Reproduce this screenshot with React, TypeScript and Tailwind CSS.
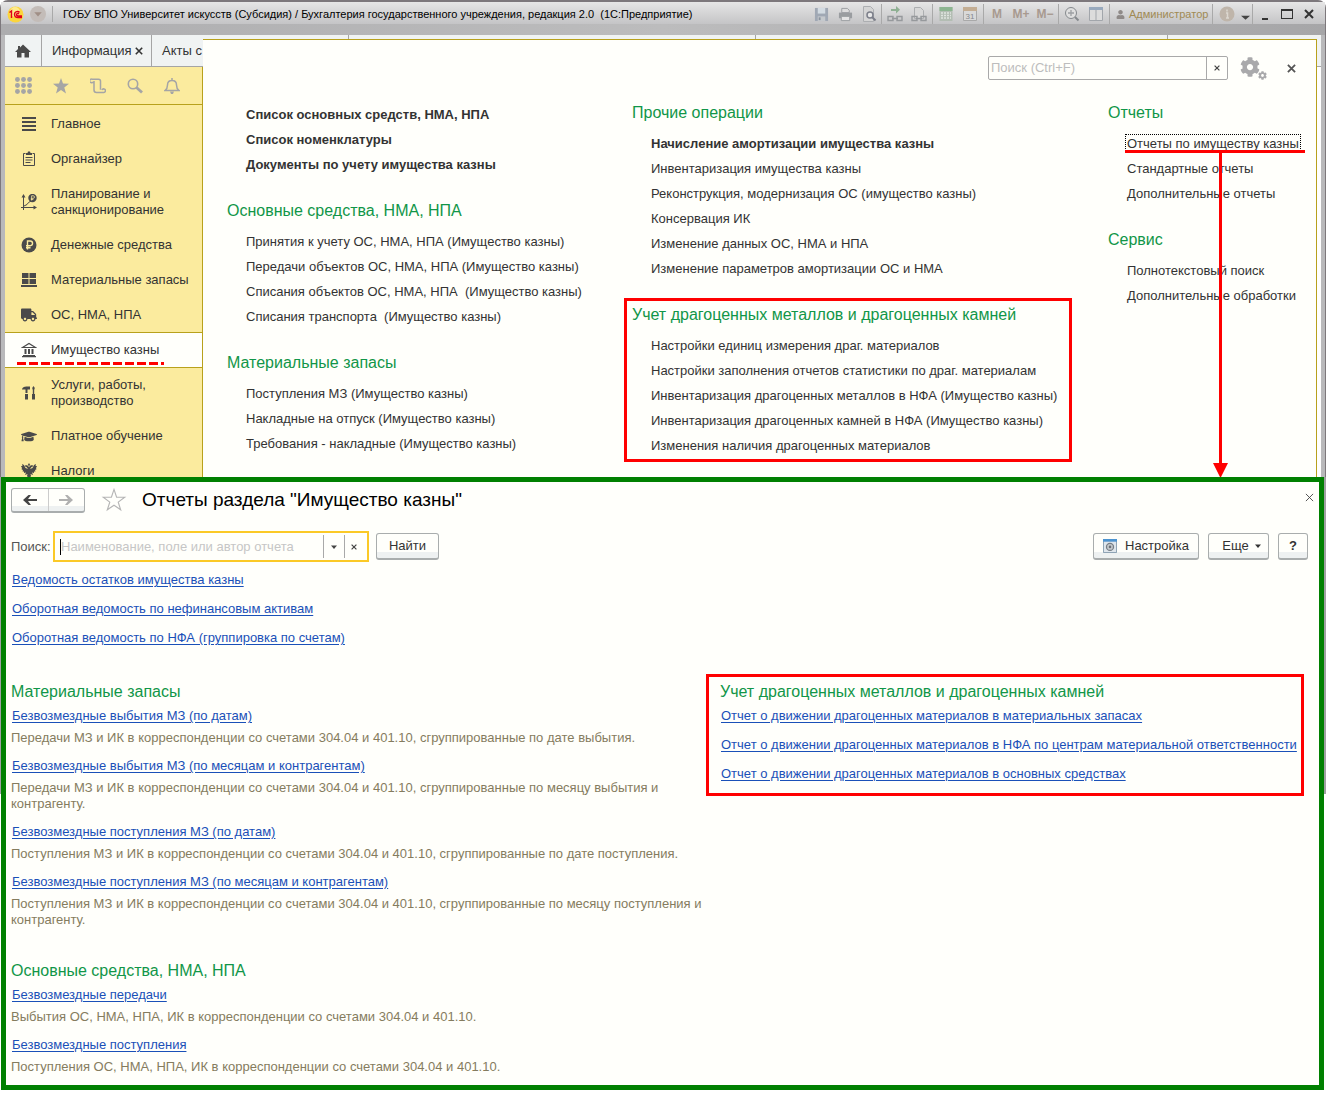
import React from 'react';
import { FaCog, FaGraduationCap, FaTruck, FaUser } from 'react-icons/fa';

interface MenuItem {
  label: string;
  icon: React.ReactNode;
  active?: boolean;
}

interface MenuGroup {
  title?: string;
  items: string[];
  bold?: number[];
  marked?: boolean;
}

interface Report {
  name: string;
  description: string;
}

const Svg: React.FC<{ size?: number; className?: string; children: React.ReactNode }> = ({ size = 16, className, children }) => (
  <svg width={size} height={size} viewBox="0 0 16 16" className={className} fill="currentColor" aria-hidden="true">
    {children}
  </svg>
);

const stroke = { fill: 'none', stroke: 'currentColor' };

const Ruble: React.FC<{ cut: string }> = ({ cut }) => (
  <>
    <circle cx="8" cy="8" r="7.500" />
    <path d="M6.500 12.500V4h2.700a2.300 2.300 0 0 1 0 4.700H5M5 10.700h4.500" fill="none" stroke={cut} strokeWidth="1.400" />
  </>
);

const menuItems: MenuItem[] = [
  { label: 'Главное', icon: <Svg><path d="M1 1h14v2H1zM1 5h14v2H1zM1 9h14v2H1zM1 13h14v2H1z" /></Svg> },
  {
    label: 'Органайзер',
    icon: <Svg><path d="M4.500 2.500h-2v12h11v-12h-2" {...stroke} /><path d="M5 4V2h1.500L7 .5h2L9.500 2H11v2zM4.500 6h7v1h-7zM4.500 8.500h7v1h-7zM4.500 11h5v1h-5z" /></Svg>,
  },
  {
    label: 'Планирование и санкционирование',
    icon: (
      <Svg>
        <path d="M2.500 16V2M0 13.500h14M3 12l3-1.500 1.500-2L10 7" {...stroke} />
        <path d="M.5 3.500L2.500 0l2 3.500zM12.500 11.500l3.500 2-3.500 2z" />
        <g transform="translate(7 -.5) scale(.56)"><Ruble cut="#fbeb9e" /></g>
      </Svg>
    ),
  },
  { label: 'Денежные средства', icon: <Svg><Ruble cut="#fbeb9e" /></Svg> },
  { label: 'Материальные запасы', icon: <Svg><path d="M1 1h6.500v5H1zM8.500 1H15v5H8.500zM1 7h6.500v5H1zM8.500 7H15v5H8.500zM0 13h16v2H0z" /></Svg> },
  { label: 'ОС, НМА, НПА', icon: <FaTruck size={16} /> },
  {
    label: 'Имущество казны',
    active: true,
    icon: <Svg><path d="M1.500 5.500L8 1.500l6.500 4z" {...stroke} strokeWidth="1.200" /><path d="M3.500 7h2v5h-2zM7 7h2v5H7zM10.500 7h2v5h-2zM2 13h12v1H2zM1 14h14v1.200H1z" /></Svg>,
  },
  {
    label: 'Услуги, работы, производство',
    icon: <Svg><path d="M1 4.500C1.500 2 3 1.500 9 1.500v3H6.500V8h-2V4.500zM4 9h3v5.500H4zM12.500 1l1.300 2-.6 2v4h-1.400V5l-.6-2zM11 9h3v5.500h-3z" /></Svg>,
  },
  { label: 'Платное обучение', icon: <FaGraduationCap size={17} /> },
  {
    label: 'Налоги',
    icon: (
      <Svg>
        <path d="M8 0l1.200 2L8 3 6.800 2zM6.500 2.500L4.500 2l-.5 1.500 1.500.5L7 6 4.500 5 3 2 1 1l.5 2L0 3l1 2-.5 1.200L2 7l-.5 1.500L3 8.500 3 10l2-.5L4 12l2.500-1L6 13l2 3 2-3-.5-2 2.500 1-1-2.500 2 .5V8.500l1.500 0L14 7l1.500-.8L15 5l1-2h-1.500L15 1l-2 1-1.500 3L9 6l1.500-2 1.500-.5L11.500 2l-2 .5L8 4z" />
      </Svg>
    ),
  },
];

const columns: MenuGroup[][] = [
  [
    { items: ['Список основных средств, НМА, НПА', 'Список номенклатуры', 'Документы по учету имущества казны'], bold: [0, 1, 2] },
    {
      title: 'Основные средства, НМА, НПА',
      items: [
        'Принятия к учету ОС, НМА, НПА (Имущество казны)',
        'Передачи объектов ОС, НМА, НПА (Имущество казны)',
        'Списания объектов ОС, НМА, НПА  (Имущество казны)',
        'Списания транспорта  (Имущество казны)',
      ],
    },
    {
      title: 'Материальные запасы',
      items: ['Поступления МЗ (Имущество казны)', 'Накладные на отпуск (Имущество казны)', 'Требования - накладные (Имущество казны)'],
    },
  ],
  [
    {
      title: 'Прочие операции',
      bold: [0],
      items: [
        'Начисление амортизации имущества казны',
        'Инвентаризация имущества казны',
        'Реконструкция, модернизация ОС (имущество казны)',
        'Консервация ИК',
        'Изменение данных ОС, НМА и НПА',
        'Изменение параметров амортизации ОС и НМА',
      ],
    },
    {
      title: 'Учет драгоценных металлов и драгоценных камней',
      marked: true,
      items: [
        'Настройки единиц измерения драг. материалов',
        'Настройки заполнения отчетов статистики по драг. материалам',
        'Инвентаризация драгоценных металлов в НФА (Имущество казны)',
        'Инвентаризация драгоценных камней в НФА (Имущество казны)',
        'Изменения наличия драгоценных материалов',
      ],
    },
  ],
  [
    { title: 'Отчеты', items: ['Отчеты по имуществу казны', 'Стандартные отчеты', 'Дополнительные отчеты'] },
    { title: 'Сервис', items: ['Полнотекстовый поиск', 'Дополнительные обработки'] },
  ],
];

const TARGET_ITEM = 'Отчеты по имуществу казны';

const commonReports = [
  'Ведомость остатков имущества казны',
  'Оборотная ведомость по нефинансовым активам',
  'Оборотная ведомость по НФА (группировка по счетам)',
];

const stockReports: Report[] = [
  { name: 'Безвозмездные выбытия МЗ (по датам)', description: 'Передачи МЗ и ИК в корреспонденции со счетами 304.04 и 401.10, сгруппированные по дате выбытия.' },
  { name: 'Безвозмездные выбытия МЗ (по месяцам и контрагентам)', description: 'Передачи МЗ и ИК в корреспонденции со счетами 304.04 и 401.10, сгруппированные по месяцу выбытия и контрагенту.' },
  { name: 'Безвозмездные поступления МЗ (по датам)', description: 'Поступления МЗ и ИК в корреспонденции со счетами 304.04 и 401.10, сгруппированные по дате поступления.' },
  { name: 'Безвозмездные поступления МЗ (по месяцам и контрагентам)', description: 'Поступления МЗ и ИК в корреспонденции со счетами 304.04 и 401.10, сгруппированные по месяцу поступления и контрагенту.' },
];

const assetReports: Report[] = [
  { name: 'Безвозмездные передачи', description: 'Выбытия ОС, НМА, НПА, ИК в корреспонденции со счетами 304.04 и 401.10.' },
  { name: 'Безвозмездные поступления', description: 'Поступления ОС, НМА, НПА, ИК в корреспонденции со счетами 304.04 и 401.10.' },
];

const preciousReports = [
  'Отчет о движении драгоценных материалов в материальных запасах',
  'Отчет о движении драгоценных материалов в НФА по центрам материальной ответственности',
  'Отчет о движении драгоценных материалов в основных средствах',
];

const CrossIcon: React.FC<{ size: number; width?: number }> = ({ size, width = 2 }) => (
  <svg width={size} height={size} viewBox="0 0 10 10" aria-hidden="true">
    <path d="M1 1l8 8M9 1L1 9" fill="none" stroke="currentColor" strokeWidth={width} />
  </svg>
);

const ToolButton: React.FC<{ label: string; children: React.ReactNode }> = ({ label, children }) => (
  <button type="button" aria-label={label} className="flex h-5 w-6 items-center justify-center">
    {children}
  </button>
);

const ToolGroup: React.FC<{ children: React.ReactNode }> = ({ children }) => (
  <div className="flex items-center border-l border-[#a9a9a9] px-px">{children}</div>
);

const TitleBar: React.FC = () => (
  <header className="flex h-[22px] items-center bg-linear-to-b from-[#e6e6e6] to-[#c4c4c6] pt-0.5 pr-1 pl-1.5 text-[11px] text-black">
    <svg width="17" height="17" viewBox="0 0 17 17" role="img" aria-label="1С">
      <circle cx="8.500" cy="8.500" r="8" fill="#fbd53c" />
      <circle cx="8" cy="6" r="5" fill="#fdea8c" />
      <path d="M2.500 6.500L4.500 5v7M12.500 6.500C11.500 5 7.500 5 7.500 8.500c0 2.500 2 3 3.500 3h4M12 8c-1-1-2.800-.5-2.500 1 .2 1 1 1 2 1H15" fill="none" stroke="#e2001a" strokeWidth="1.400" />
    </svg>
    <button type="button" aria-label="Меню" className="ml-1.5 flex size-4 items-center justify-center rounded-full bg-[#c3bcb8] text-[#a08f86]">
      <Svg size={10}><path d="M2 5h12L8 12z" /></Svg>
    </button>
    <span className="mr-2.5 ml-1.5 h-4 w-px bg-[#a9a9a9]" />
    <h1 className="min-w-0 flex-1 truncate">ГОБУ ВПО Университет искусств (Субсидия) / Бухгалтерия государственного учреждения, редакция 2.0&nbsp; (1С:Предприятие)</h1>
    <div className="flex h-5 items-center text-[#9c9fa3]">
      <div className="flex items-center">
        <ToolButton label="Сохранить">
          <Svg size={15}><path d="M1 1h14v14H1z" fill="#a0a8b4" /><path d="M4 1h8v6H4z" fill="#d3dbe2" /><path d="M4 10h8v5H4z" fill="#c5c9cd" /><path d="M5 11h2v3H5z" fill="#8a939e" /></Svg>
        </ToolButton>
        <ToolButton label="Печать">
          <Svg size={15}><path d="M4 1.500h6l2 2V6H4z" fill="#ddd" stroke="#9a9da0" /><path d="M1 6h14v6H1z" fill="#9a9da0" /><path d="M3.500 10h9v4.500h-9z" fill="#e4e4e4" stroke="#9a9da0" /></Svg>
        </ToolButton>
        <ToolButton label="Просмотр">
          <Svg><path d="M2.500.5h7l3 3v12h-10z" fill="#d5d5d5" stroke="#acaeb1" /><circle cx="9" cy="9" r="3" fill="#e8e8e8" stroke="#7c7f8a" strokeWidth="1.500" /><path d="M11 11l3.500 3.500" stroke="#7c7f8a" strokeWidth="2" /></Svg>
        </ToolButton>
      </div>
      <ToolGroup>
        <ToolButton label="Получить ссылку">
          <Svg><path d="M4 3h5V0l4 3.800L9 7.500V5H4z" fill="#8fb093" /><path d="M1 10.500h5v4H1zM10 10.500h5v4h-5zM5 12.500h6" fill="none" stroke="#96999c" strokeWidth="1.400" /></Svg>
        </ToolButton>
        <ToolButton label="Перейти по ссылке">
          <Svg><path d="M3.500 1.500h6l3 3v8h-9z" fill="#d8d8d8" stroke="#acaeb0" /><path d="M1 10.500h5v4H1zM10 10.500h5v4h-5zM5 12.500h6" fill="none" stroke="#96999c" strokeWidth="1.400" /></Svg>
        </ToolButton>
      </ToolGroup>
      <ToolGroup>
        <ToolButton label="Калькулятор">
          <Svg><path d="M1.500 1h13v14h-13z" fill="#b3bdb3" /><path d="M1.500 1h13v4h-13z" fill="#8db591" /><path d="M3 7h10M3 9.500h10M3 12h10" stroke="#dfe5df" strokeWidth="1.500" strokeDasharray="2 1" /></Svg>
        </ToolButton>
        <ToolButton label="Календарь">
          <svg width="16" height="16" viewBox="0 0 16 16" aria-hidden="true">
            <path d="M1.500 2.500h13v12h-13z" fill="#d9d9d9" stroke="#a9a9a9" />
            <path d="M1 1h14v4H1z" fill="#c3ad93" />
            <text x="8" y="13" textAnchor="middle" fontSize="8" fill="#85898d">31</text>
          </svg>
        </ToolButton>
      </ToolGroup>
      <div className="flex items-center border-l border-[#a9a9a9] px-px text-[12px] font-bold text-[#a89a90]">
        <ToolButton label="M">M</ToolButton>
        <ToolButton label="M+">M+</ToolButton>
        <ToolButton label="M-">M−</ToolButton>
      </div>
      <ToolGroup>
        <ToolButton label="Масштаб">
          <Svg><circle cx="7" cy="7" r="5.500" fill="#dfdfdf" stroke="#85898d" /><path d="M4 7h6M7 4v6" {...stroke} strokeWidth="1.300" /><path d="M11 11l3.500 3.500" stroke="#85898d" strokeWidth="2" /></Svg>
        </ToolButton>
        <ToolButton label="Окна">
          <Svg><path d="M1.500 2h13v12.500h-13zM8 2v12" fill="#dcdcdc" stroke="#a2a6ab" /><path d="M1 1h14v3H1z" fill="#98a9bd" /></Svg>
        </ToolButton>
      </ToolGroup>
      <button type="button" className="flex h-5 w-[103px] items-center gap-1 border-l border-[#a9a9a9] pl-1.5 text-[#a08a54]">
        <FaUser size={9} className="shrink-0 text-[#8f8a88]" />
        Администратор
      </button>
      <button type="button" aria-label="О программе" className="flex h-5 w-10 items-center gap-1.5 border-l border-[#a9a9a9] pl-1.5">
        <svg width="16" height="16" viewBox="0 0 16 16" className="shrink-0" aria-hidden="true">
          <circle cx="8" cy="8" r="7.500" fill="#bfb5aa" />
          <path d="M8 3.500v2M7 7h1.500v5H7h3" fill="none" stroke="#dcd7d0" strokeWidth="1.500" />
        </svg>
        <Svg size={9} className="mt-1.5 text-[#444]"><path d="M0 5h16l-8 7z" /></Svg>
      </button>
      <div className="flex items-center border-l border-[#a9a9a9] text-[#333]">
        <button type="button" aria-label="Свернуть" className="flex h-5 w-6 items-end justify-center pb-1"><span className="h-0.5 w-1.5 bg-[#333]" /></button>
        <button type="button" aria-label="Развернуть" className="flex h-5 w-5 items-center justify-center"><span className="h-2.5 w-3 border border-t-2 border-[#333]" /></button>
        <button type="button" aria-label="Закрыть" className="flex h-5 w-6 items-center justify-center"><CrossIcon size={10} width={2} /></button>
      </div>
    </div>
  </header>
);

const Tabs: React.FC = () => (
  <nav className="flex h-8 border-b border-[#a5a5a5] bg-[#f0f3f3] text-[13px] text-[#333]">
    <button type="button" aria-label="Начальная страница" className="flex w-[37px] items-center justify-center border-r border-[#a5a5a5] text-[#4a4a4a]">
      <Svg><path d="M8 1.500L16 9h-2v5.500H9.500V10h-3v4.500H2V9H0l3-3V3h2v1.500z" /></Svg>
    </button>
    <div className="flex w-[110px] items-center justify-between border-r border-[#a5a5a5] pr-2 pl-2.5">
      <a href="#info">Информация</a>
      <button type="button" aria-label="Закрыть вкладку"><CrossIcon size={8} width={2} /></button>
    </div>
    <a href="#acts" className="flex w-[197px] items-center border-r border-[#a5a5a5] pl-2.5">Акты с</a>
    <span className="w-[407px] border-r border-[#a5a5a5]" />
    <span className="w-[412px] border-r border-[#a5a5a5]" />
  </nav>
);

const Sidebar: React.FC = () => (
  <aside className="w-[198px] shrink-0 border-r border-[#b8a11c] bg-[#fbeb9e] text-[#333]">
    <div className="mb-px flex h-[38px] items-center gap-[21px] border-b border-[#b8a11c] pl-2.5 text-[#a5a5a5]">
      <button type="button" aria-label="Разделы">
        <Svg size={17}>
          {[2.300, 8, 13.700].map((y) => [2.300, 8, 13.700].map((x) => <circle key={`${x}-${y}`} cx={x} cy={y} r="2.300" />))}
        </Svg>
      </button>
      <button type="button" aria-label="Избранное"><Svg><path d="M8 0l2 5.600 6 .2-4.700 3.700L13 15.500l-5-3.500-5 3.500 1.700-6L0 5.800l6-.2z" /></Svg></button>
      <button type="button" aria-label="История">
        <Svg><path d="M4 4.500H2.200a1.800 1.800 0 1 1 0-3.200H8.500a2 2 0 0 1 2 2v8.500M4 3v9a2.500 2.500 0 0 0 2.500 2.500h7.300a1.800 1.800 0 1 0-1.800-2.500" {...stroke} strokeWidth="1.500" /></Svg>
      </button>
      <button type="button" aria-label="Поиск"><Svg><circle cx="6" cy="6" r="4.700" {...stroke} strokeWidth="1.600" /><path d="M9.500 9.500l5.500 5" {...stroke} strokeWidth="2.800" /></Svg></button>
      <button type="button" aria-label="Оповещения"><Svg><path d="M1 12.500h14c-2-1.500-2.500-3-2.500-5.500C12.500 4 10.500 2.500 8 2.500S3.500 4 3.500 7c0 2.500-.5 4-2.500 5.500zM8 0v2.500" {...stroke} strokeWidth="1.500" /><path d="M6 13.500h4L9 16H7z" /></Svg></button>
    </div>
    <ul className="text-[13px] leading-4">
      {menuItems.map((item) => (
        <li key={item.label} className={item.active ? 'relative -mb-px border-y border-[#b8a11c] bg-[#fffffb]' : 'border-t border-transparent'}>
          <a href="#section" className="flex items-center gap-3.5 py-2 pr-3 pl-4">
            <span className="flex w-4 shrink-0 justify-center text-[#4a4a4a]">{item.icon}</span>
            <span className="py-px">{item.label}</span>
          </a>
          {item.active && (
            <svg width="147" height="3" className="absolute bottom-0.5 left-3" aria-hidden="true">
              <path d="M0 1.500h147" stroke="#f00" strokeWidth="3" strokeDasharray="9 3" />
            </svg>
          )}
        </li>
      ))}
    </ul>
  </aside>
);

const MenuLink: React.FC<{ label: string; bold?: boolean }> = ({ label, bold }) => {
  if (label !== TARGET_ITEM) {
    return <a href="#item" className={bold ? 'font-bold whitespace-pre' : 'whitespace-pre'}>{label}</a>;
  }
  return (
    <span className="relative">
      <a href="#reports" className="whitespace-pre outline-1 outline-offset-1 outline-black outline-dotted">{label}</a>
      <span className="absolute -right-1.5 -bottom-0.5 -left-0.5 h-[3px] bg-[#f00]" />
      <svg width="15" height="326" viewBox="0 0 15 326" className="absolute top-4 left-[86px]" aria-hidden="true">
        <path d="M6 0h3v312H6zM0 311h15l-7.500 15z" fill="#f00" />
      </svg>
    </span>
  );
};

const FunctionsPanel: React.FC = () => (
  <section className="relative z-10 -mt-7 min-w-0 flex-1 border-t border-r border-[#b8a11c] bg-[#fffffb] pb-[30px]">
    <div className="flex h-[60px] items-center justify-end pr-5 pb-1">
      <div className="flex h-6 w-60 rounded-xs border border-[#a9a9a9] text-[13px]">
        <input aria-label="Поиск" placeholder="Поиск (Ctrl+F)" className="min-w-0 flex-1 px-0.5 outline-none placeholder:text-[#bdbdbd]" />
        <button type="button" aria-label="Очистить" className="flex w-[21px] items-center justify-center border-l border-[#a9a9a9] text-[#444]">
          <CrossIcon size={6} />
        </button>
      </div>
      <button type="button" aria-label="Настройки" className="ml-3 flex text-[#a9a9ab]">
        <FaCog size={20} />
        <FaCog size={9} className="mt-3.5 -ml-0.5" />
      </button>
      <button type="button" aria-label="Закрыть" className="ml-5 text-[#555]"><CrossIcon size={9} width={2} /></button>
    </div>
    <div className="grid grid-cols-[405fr_476fr_208fr] pl-6 text-[13px] text-[#333]">
      {columns.map((groups, index) => (
        <div key={index} className="flex min-w-0 flex-col gap-[21px]">
          {groups.map((group) => (
            <div key={group.items[0]} className={group.marked ? 'relative w-[440px]' : ''}>
              {group.title && <h2 className="mb-1.5 h-[25px] text-[16px] leading-[25px] whitespace-nowrap text-[#119648]">{group.title}</h2>}
              <ul className={group.title ? 'pl-[19px]' : 'pt-0.5 pl-[19px]'}>
                {group.items.map((item, i) => (
                  <li key={item} className="h-[25px] leading-[25px]">
                    <MenuLink label={item} bold={group.bold?.includes(i)} />
                  </li>
                ))}
              </ul>
              {group.marked && <span className="pointer-events-none absolute -inset-y-1 right-0 -left-2 border-3 border-[#f00]" />}
            </div>
          ))}
        </div>
      ))}
    </div>
  </section>
);

const buttonClass = 'flex h-[27px] items-center justify-center rounded-[3px] border border-b-2 border-[#a9adad] bg-linear-to-b from-[#fffffb] from-75% to-[#eef1f1] to-75% text-[13px] text-[#333]';

const ReportLink: React.FC<{ name: string }> = ({ name }) => (
  <a href="#report" className="ml-px block h-5 w-fit text-[13px] leading-5 whitespace-nowrap text-[#1a50b8] underline underline-offset-2">{name}</a>
);

const ReportSection: React.FC<{ title: string; reports: Report[] }> = ({ title, reports }) => (
  <section>
    <h3 className="mb-0.5 h-6 text-[16px] leading-6 text-[#119648]">{title}</h3>
    <ul className="flex flex-col gap-2.5">
      {reports.map((report) => (
        <li key={report.name}>
          <ReportLink name={report.name} />
          <p className="mt-1 text-[13px] leading-4 text-[#857c5e]">{report.description}</p>
        </li>
      ))}
    </ul>
  </section>
);

const ReportsWindow: React.FC = () => (
  <div className="relative z-20 -mt-[11px] px-px">
    <span className="absolute inset-x-0 top-0 h-[317px] border-x-2 border-b border-[#a0a0a2]" />
    <main className="relative mr-px border-5 border-[#008000] bg-[#fffffb] pt-1 pr-[11px] pb-2.5 pl-[5px]">
      <div className="flex h-7 items-center">
        <div className="flex h-[25px] w-[74px] rounded-[3px] border border-b-2 border-[#a9adad] bg-linear-to-b from-[#fffffb] from-75% to-[#eef1f1] to-75%">
          <button type="button" aria-label="Назад" className="flex flex-1 items-center justify-center border-r border-[#ccc] text-[#444]">
            <Svg><path d="M1 8l5.500-5H9L6 7h9v2H6l3 4H6.500z" /></Svg>
          </button>
          <button type="button" aria-label="Вперед" className="flex flex-1 items-center justify-center text-[#b0b0b0]">
            <Svg><path d="M15 8L9.500 3H7l3 4H1v2h9l-3 4h2.500z" /></Svg>
          </button>
        </div>
        <button type="button" aria-label="В избранное" className="ml-4 text-[#b5b5b5]">
          <Svg size={26}><path d="M8 1.500l1.600 4.700 5 .1-4 3 1.500 4.700L8 11.200 3.900 14l1.500-4.700-4-3 5-.1z" {...stroke} strokeWidth=".7" /></Svg>
        </button>
        <h2 className="ml-[15px] text-[19px] text-black">Отчеты раздела "Имущество казны"</h2>
        <button type="button" aria-label="Закрыть" className="mb-1.5 ml-auto -mr-1.5 text-[#444]"><CrossIcon size={9} width={1} /></button>
      </div>

      <div className="mt-[17px] flex h-[31px] items-center">
        <label htmlFor="report-search" className="w-[42px] text-[13px] text-[#555]">Поиск:</label>
        <div className="relative flex h-[31px] w-[316px] border-2 border-[#fbc926] py-0.5 text-[13px] text-[#444]">
          <input id="report-search" placeholder="Наименование, поле или автор отчета" className="min-w-0 flex-1 pl-1.5 outline-none placeholder:text-[#c6c6c6]" />
          <span className="absolute top-1.5 left-[5px] h-4 w-px bg-black" />
          <button type="button" aria-label="Выбрать" className="flex w-[21px] items-center justify-center border-l border-[#a9a9a9]">
            <Svg size={6}><path d="M0 4h16l-8 9z" /></Svg>
          </button>
          <button type="button" aria-label="Очистить" className="flex w-[23px] items-center justify-center border-l border-[#a9a9a9] pr-1"><CrossIcon size={6} /></button>
        </div>
        <button type="button" className={`${buttonClass} ml-[7px] w-[63px]`}>Найти</button>
        <button type="button" className={`${buttonClass} ml-auto w-[106px] gap-2`}>
          <Svg size={14}><path d="M.5 2h15v13.500H.5z" fill="#dfe6ec" stroke="#7c93a8" /><path d="M0 0h16v3H0z" fill="#4d94d0" /><circle cx="8" cy="9" r="4" fill="#c9cdd0" stroke="#777e85" strokeWidth="1.500" /><circle cx="8" cy="9" r="1.500" fill="#6b7178" /></Svg>
          Настройка
        </button>
        <button type="button" className={`${buttonClass} ml-[9px] w-[61px] gap-1.5 pl-1.5`}>
          Еще
          <Svg size={6}><path d="M0 4h16l-8 9z" /></Svg>
        </button>
        <button type="button" aria-label="Справка" className={`${buttonClass} ml-[9px] w-[30px] font-bold`}>?</button>
      </div>

      <ul className="mt-2 flex flex-col gap-[9px]">
        {commonReports.map((name) => <li key={name}><ReportLink name={name} /></li>)}
      </ul>

      <div className="mt-8 grid grid-cols-[709fr_588fr]">
        <div className="flex min-w-0 flex-col gap-[31px] pr-2">
          <ReportSection title="Материальные запасы" reports={stockReports} />
          <ReportSection title="Основные средства, НМА, НПА" reports={assetReports} />
        </div>
        <section className="relative h-fit min-w-0">
          <h3 className="mb-0.5 h-6 text-[16px] leading-6 text-[#119648]">Учет драгоценных металлов и драгоценных камней</h3>
          <ul className="flex flex-col gap-[9px]">
            {preciousReports.map((name) => <li key={name}><ReportLink name={name} /></li>)}
          </ul>
          <span className="pointer-events-none absolute -top-1.5 right-1 -bottom-3 -left-3.5 border-3 border-[#f00]" />
        </section>
      </div>
    </main>
  </div>
);

export default function App() {
  return (
    <div className="min-h-screen overflow-x-hidden bg-white font-['Liberation_Sans',Arial,sans-serif]">
      <div className="rounded-t-lg border-x border-t-2 border-[#7d787c] bg-[#b9b9bb]">
        <TitleBar />
        <div className="h-[11px] bg-linear-to-r from-[#adadaf] via-[#bcbcbd] to-[#a6a6a8]" />
        <div className="px-1">
          <Tabs />
          <div className="flex bg-white pr-1">
            <Sidebar />
            <FunctionsPanel />
          </div>
        </div>
      </div>
      <ReportsWindow />
    </div>
  );
}
